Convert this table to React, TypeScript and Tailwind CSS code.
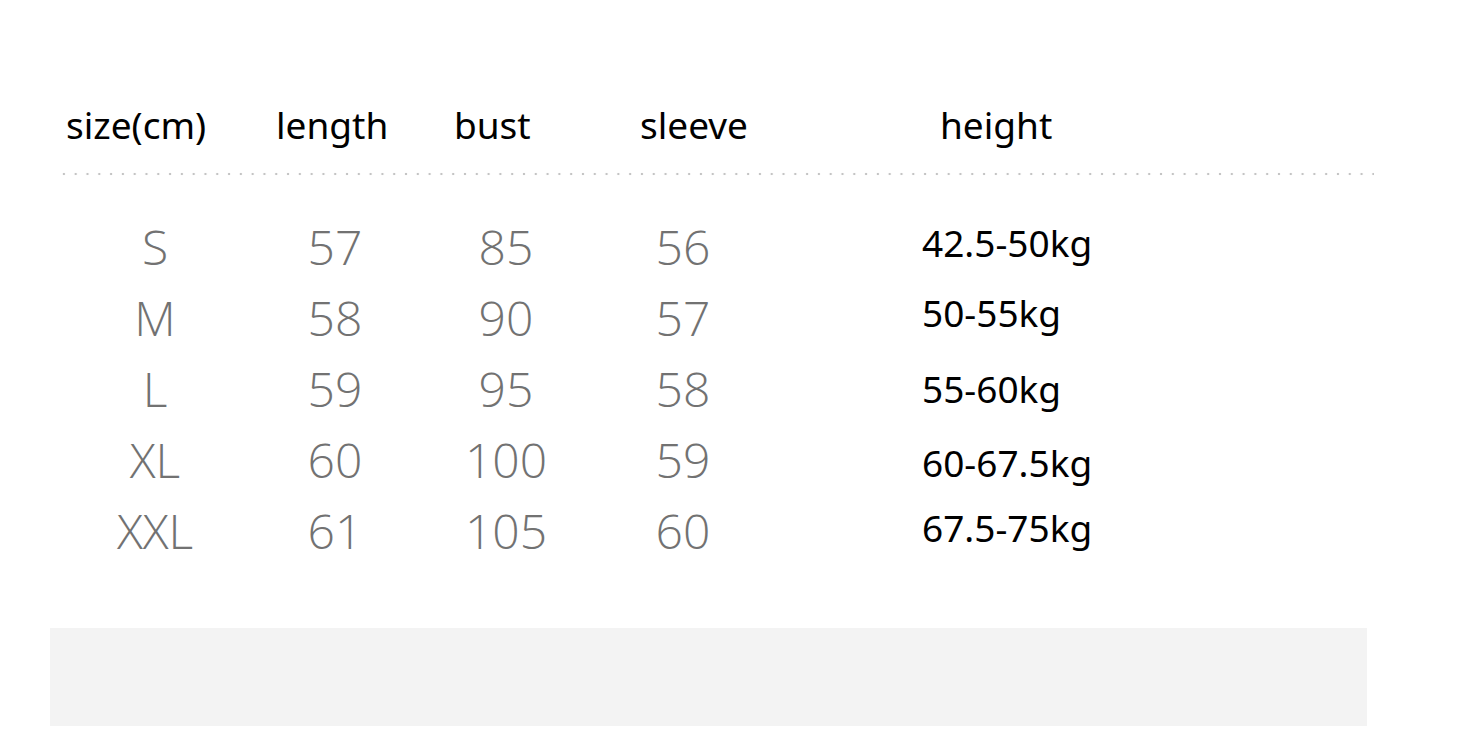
import React from "react";

const rows = [
  { size: "S", length: "57", bust: "85", sleeve: "56", height: "42.5-50kg", shift: "mt-[-8px]" },
  { size: "M", length: "58", bust: "90", sleeve: "57", height: "50-55kg", shift: "mt-[-10px]" },
  { size: "L", length: "59", bust: "95", sleeve: "58", height: "55-60kg", shift: "mt-[0px]" },
  { size: "XL", length: "60", bust: "100", sleeve: "59", height: "60-67.5kg", shift: "mt-[6px]" },
  { size: "XXL", length: "61", bust: "105", sleeve: "60", height: "67.5-75kg", shift: "mt-[-6px]" },
];

const headers = [
  { label: "size(cm)", w: "w-[210px]" },
  { label: "length", w: "w-[178px]" },
  { label: "bust", w: "w-[186px]" },
  { label: "sleeve", w: "w-[300px]" },
  { label: "height", w: "w-[200px]" },
];

const cell = "text-center text-[48px] text-[#727272] font-['Open_Sans',sans-serif] font-light";

const App = () => {
  return (
    <div className="w-[1457px] h-[736px] bg-white overflow-hidden font-['Noto_Sans',sans-serif]">
      {/* header */}
      <div className="flex items-baseline pl-[66px] pt-[100px] text-[37px] leading-[50px] text-black">
        {headers.map((h) => (
          <span key={h.label} className={h.w}>
            {h.label}
          </span>
        ))}
      </div>

      {/* dotted rule */}
      <div className="ml-[58px] mt-[22px] w-[1316px] h-[4px] bg-[radial-gradient(circle,#c4c4c4_1px,transparent_1.6px)] bg-[length:11.8px_4px]" />

      {/* size rows */}
      <div className="mt-[35px] ml-[60px]">
        {rows.map((r) => (
          <div
            key={r.size}
            className="grid grid-cols-[190px_170px_172px_182px_1fr] items-center h-[71px]"
          >
            <span className={cell}>{r.size}</span>
            <span className={cell}>{r.length}</span>
            <span className={cell}>{r.bust}</span>
            <span className={cell}>{r.sleeve}</span>
            <span className={`pl-[148px] text-[37px] text-black ${r.shift}`}>{r.height}</span>
          </div>
        ))}
      </div>

      {/* grey footer panel */}
      <div className="ml-[50px] mt-[62px] w-[1317px] h-[98px] bg-[#f3f3f3]" />
    </div>
  );
};

export default App;
